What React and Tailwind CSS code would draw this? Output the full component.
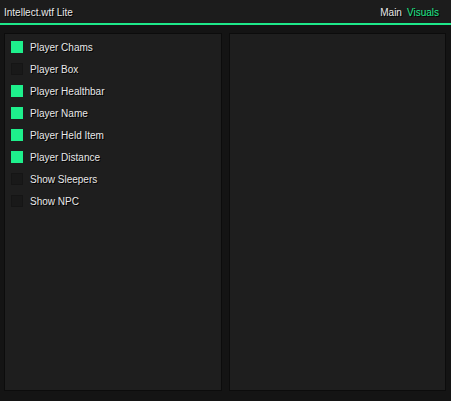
const features = [
  { label: 'Player Chams', on: true },
  { label: 'Player Box', on: false },
  { label: 'Player Healthbar', on: true },
  { label: 'Player Name', on: true },
  { label: 'Player Held Item', on: true },
  { label: 'Player Distance', on: true },
  { label: 'Show Sleepers', on: false },
  { label: 'Show NPC', on: false },
]

export default function App() {
  return (
    <div className="w-[451px] h-[401px] bg-[#141414] flex flex-col font-['Liberation_Sans',sans-serif] text-[10px] text-[#e8e8e8] [text-shadow:1px_1px_0_#000]">
      <div className="h-[23px] bg-[#1c1c1c] flex items-center justify-between pl-[4px] pr-[12px] pt-px">
        <span>Intellect.wtf Lite</span>
        <div className="flex gap-[5px]">
          <span>Main</span>
          <span className="text-[#1ee88a]">Visuals</span>
        </div>
      </div>
      <div className="h-[2px] bg-[#1ee88a]" />
      <div className="flex gap-[7px] px-[4px] pt-[8px] h-[366px]">
        <div className="w-[218px] bg-[#1e1e1e] border border-[#0c0c0c] pt-[7px] pl-[6px] flex flex-col gap-[10px]">
          {features.map((f) => (
            <div key={f.label} className="flex items-center gap-[7px] h-[12px]">
              <div
                className={
                  f.on
                    ? 'w-[12px] h-[12px] bg-[#1ef08c]'
                    : 'w-[12px] h-[12px] bg-[#191919] border border-[#151515]'
                }
              />
              <span>{f.label}</span>
            </div>
          ))}
        </div>
        <div className="w-[217px] bg-[#1e1e1e] border border-[#0c0c0c]" />
      </div>
    </div>
  )
}
